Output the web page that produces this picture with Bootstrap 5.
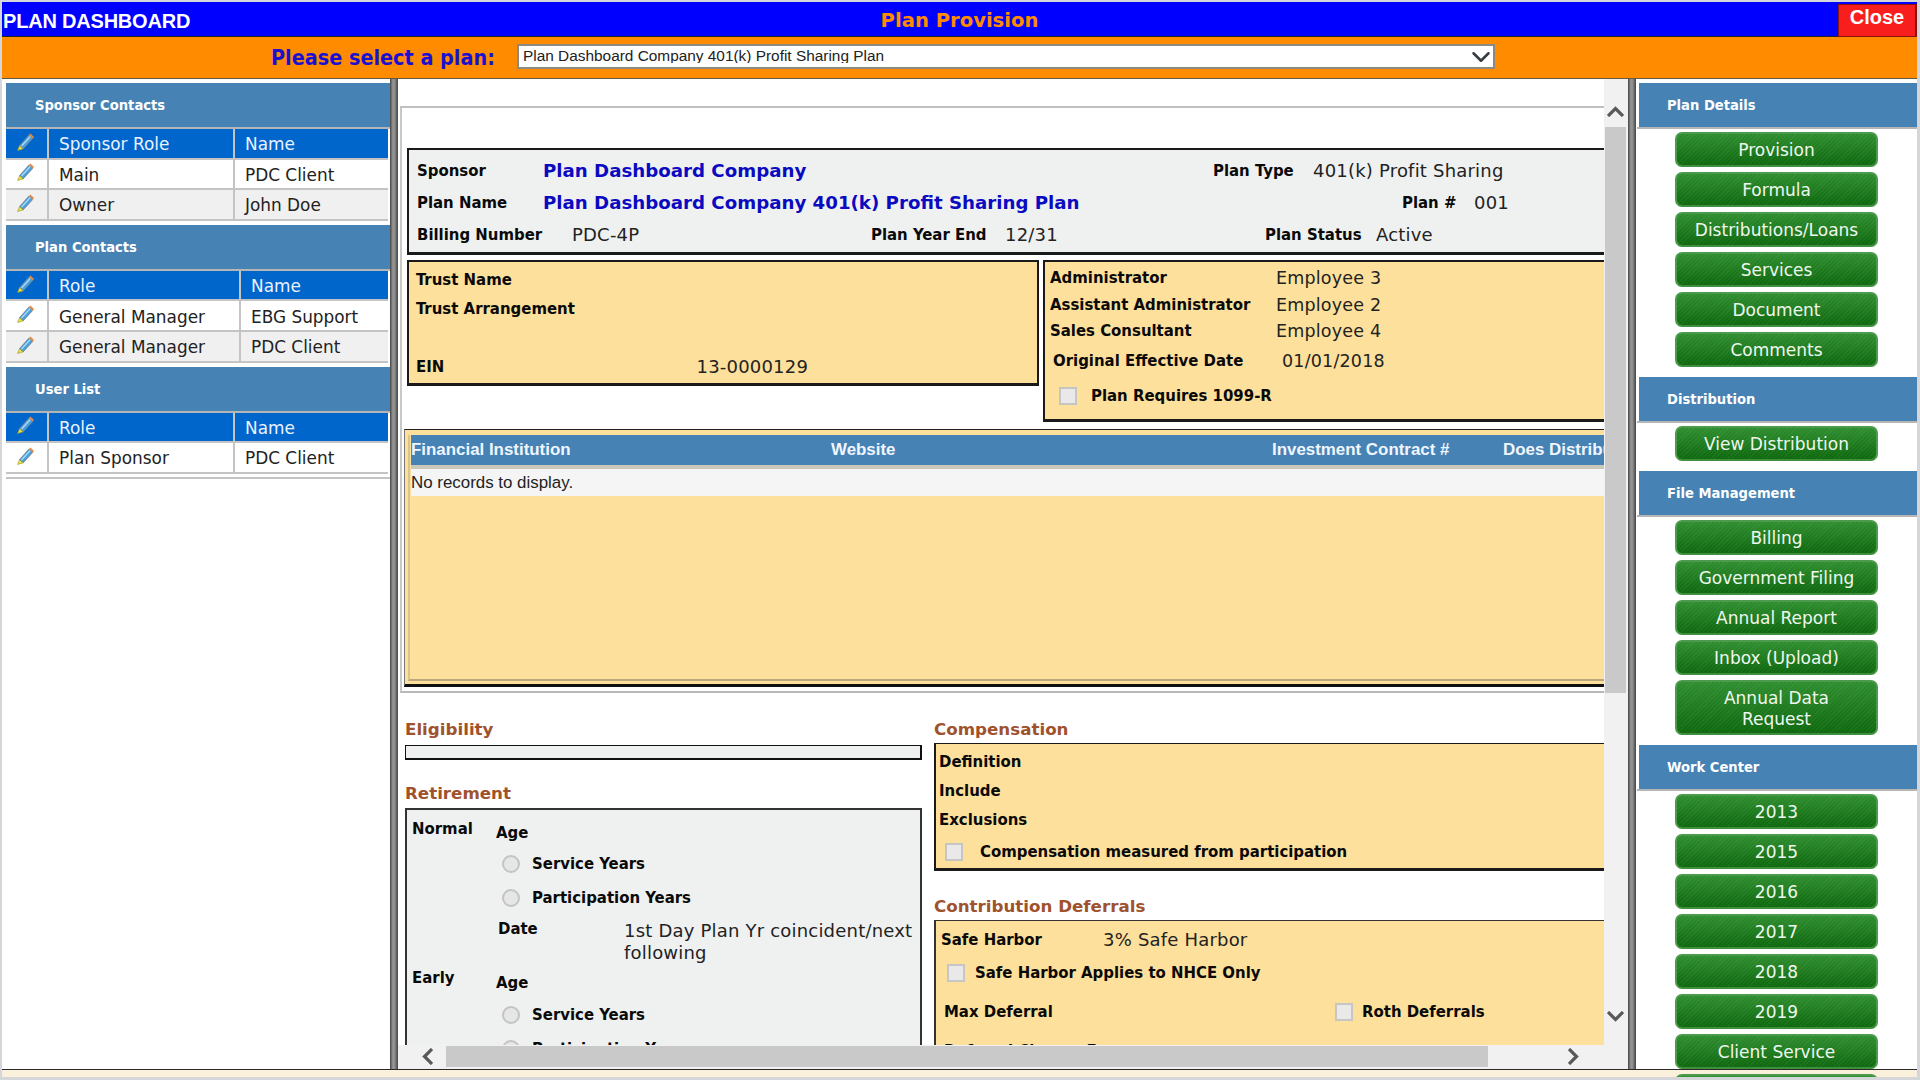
<!DOCTYPE html>
<html lang="en">
<head>
<meta charset="utf-8">
<title>Plan Dashboard</title>
<link href="https://cdn.jsdelivr.net/npm/bootstrap@5.3.0/dist/css/bootstrap.min.css" rel="stylesheet">
<style>
html,body{height:1080px;overflow:hidden}
body{background:#d4d6da;padding:2px 3px 2px 2px;font-family:"DejaVu Sans",Verdana,sans-serif;color:#111;font-size:17.5px}
.appwrap{height:1076px}
.topband{height:35px;background:#0000ff;border-bottom:1px solid #222;display:grid;grid-template-columns:1fr auto 1fr;align-items:center}
.apptitle{font:bold 20px/1 "Liberation Sans",Arial,sans-serif;color:#fff;padding:2px 0 0 1px;letter-spacing:-.2px}
.midtitle{font:bold 19.6px/1 "DejaVu Sans",sans-serif;color:#ff8c00;padding-top:2px}
.closebtn{justify-self:end;width:79px;height:33px;margin-top:2px;background:#f81e1e;border:1px solid #8b1010;border-right-width:2px;color:#fff;font:bold 20px/1 "Liberation Sans",sans-serif;padding:0 0 8px;border-radius:0}
.orangeband{height:42px;background:#ff8c00;border-bottom:1px solid #6b5a3a;padding-left:269px}
.pick-label{font:bold 21.4px/1 "DejaVu Sans Condensed","DejaVu Sans",sans-serif;color:#1a10d0;width:246px;white-space:nowrap}
.plan-select{width:978px;height:25px;border-radius:0;border:2px solid #8a8a80;font:15.4px/1 "Liberation Sans",Arial,sans-serif;color:#222;padding:0 24px 2px 4px;background-position:right 2px center;background-size:20px 20px;margin-top:-2px}
.shellarea{height:998px;background:linear-gradient(#fff 990px,#2a2a2a 990px,#2a2a2a 991px,#fbf0dc 991px)}
.leftcol{width:388px;padding:4px 0 0 4px;height:990px;background:#fff;overflow:hidden}
.splitbar{width:8px;height:990px;background:linear-gradient(90deg,#444,#8a8a8a 30%,#999 50%,#777 70%,#444)}
.sechead{height:44px;background:#4682b4;color:#fff;font:bold 14.6px/44px "DejaVu Sans Condensed","DejaVu Sans",sans-serif;padding-left:29px;border-bottom:0}
.leftcol .sechead{width:384px}
.sechead-line{height:2px;background:#b5b5b5}
.gridtbl{table-layout:fixed;width:382px;margin:0;border-collapse:separate;border-spacing:0;--bs-table-bg:transparent}
.gridtbl td{padding:3px 0 0 10px;height:30.6px;font-size:16.9px;line-height:25px;color:#222;border:0;border-bottom:2px solid #c4c4c4;border-right:2px solid #c4c4c4;vertical-align:middle;background:#fff;box-shadow:none}
.gridtbl td:last-child{border-right:0}
.gridtbl .hdrow td{background:#0066cc;color:#eaf2ff}
.gridtbl .altrow td{background:#f0f0f0}
.col-ico{width:43px}
.col-role-a{width:186px}
.col-role-b{width:192px}
.tblend{margin-bottom:4px}
.tblend2{border-bottom:2px solid #c4c4c4;padding-bottom:3px;width:384px}
.pencil{display:block;width:20px;height:20px;margin-top:-6px}
.midcol{width:1230px;height:990px}
.midview{width:1206px;height:966px;overflow:hidden;background:#fff}
.topstrip{height:29px;border-bottom:2px solid #c0c0c0;margin-left:2px}
.detailframe{height:585px;width:1500px;border-left:2px solid #c8c8c8;margin-left:2px;padding:40px 0 0 5px;border-bottom:2px solid #b8b8b8}
.bx{border:2px solid #1a1a1a;border-bottom-width:3px}
.graybx{background:#eff1f1}
.yelbx{background:#fde09b}
.sponsorbx{width:1500px;height:107px;padding:5px 0 0 8px}
.rw{display:grid;height:32px;align-items:center;white-space:nowrap}
.rw1{grid-template-columns:126px 670px 100px 1fr}
.rw2{grid-template-columns:126px 859px 72px 1fr}
.rw3{grid-template-columns:155px 299px 134px 260px 111px 1fr}
.lb{font:bold 16.6px/1.2 "DejaVu Sans Condensed","DejaVu Sans",sans-serif;color:#0a0a0a}
.vl{font-size:18px;line-height:22px;color:#222;letter-spacing:.2px}
.bl{font:bold 18.2px/1 "DejaVu Sans",sans-serif;color:#0a0ac0}
.pairrow{margin-top:5px;gap:4px}
.trustbx{width:632px;height:126px;padding:3px 0 0 7px;flex:none}
.trustbx .rw{height:29px;grid-template-columns:280.5px 1fr}
.einrow{margin-top:29px}
.adminbx{width:900px;height:162px;padding:3px 0 0 5px;flex:none}
.adminrows .rw{height:26.5px;grid-template-columns:226px 1fr}
.adminrows .vl{font-size:17.5px}
.adminrows .effrow{height:32px;grid-template-columns:229px 1fr;padding-left:3px}
.chkrow{display:flex;align-items:center;height:38px;padding-left:9px}
.fakechk{width:18px;height:18px;background:#e9e9e9;border:2px solid #c6c6c6;flex:none}
.chkrow .fakechk{margin-right:14px}
.finbx{margin-top:7px;margin-left:-3px;width:1500px;height:258px;background:#fde09b;border-top:1px solid #222;border-left:1px solid #777;border-bottom:3px solid #111;padding:5px 0 0 3px}
.fininner{height:246px;border-left:2px solid #d8c48e;border-bottom:2px solid #bba97e;padding-left:1px}
.finhead{height:30px;background:#4682b4;color:#f0f6ff;font:bold 16.9px/30px "Liberation Sans",Arial,sans-serif;display:grid;grid-template-columns:420px 441px 231px 1fr;border-bottom:0;white-space:nowrap}
.finsub{height:4px;background:#c9c8bb}
.finempty{height:27px;background:#f5f5f5;font:16.9px/28px "Liberation Sans",Arial,sans-serif;color:#222}
.twocols{display:grid;grid-template-columns:529px 700px;padding:26px 0 0 7px}
.seclabel{font:bold 16.7px/20px "DejaVu Sans",sans-serif;color:#a0522d;height:20px}
.eligbx{width:517px;height:15px;border:1px solid #111;border-bottom-width:2px;border-right-width:2px;background:#eff1f1;margin:6px 0 23px}
.retbx{width:517px;height:260px;background:#eff1f1;border:2px solid #333;border-bottom:0;margin-top:5px;padding:7px 0 0 5px}
.retgrid{display:grid;grid-template-columns:84px 1fr}
.lbr{height:24px;line-height:24px}
.agecell{margin-top:4px;margin-bottom:2px}
.agecell2{margin-top:5px;margin-bottom:3px}
.radrow{display:flex;align-items:center;height:34px;padding-left:6px}
.fakeradio{width:18px;height:18px;border-radius:50%;background:#e6e6e6;border:2px solid #c4c4c4;margin-right:12px;flex:none}
.daterow{display:grid;grid-template-columns:126px 300px;padding:4px 0 0 2px;height:51px}
.daterow .vl{line-height:22px;padding-top:1px;white-space:normal}
.compbx{width:700px;height:128px;padding:3px 0 0 3px;border-width:1px 0 3px 2px}
.comprow{height:29px;display:flex;align-items:center}
.compbx .chkrow{padding-left:6px;height:36px;margin-top:0}
.compbx .chkrow .fakechk{margin-right:17px}
.contrhead{margin-top:25px}
.contrbx{width:700px;height:150px;padding:4px 0 0 5px;border-width:1px 0 0 2px;border-color:#333;margin-top:4px}
.sfrow{height:30px;display:grid;grid-template-columns:162px 1fr;align-items:center}
.chk2{height:36px;padding-left:6px}
.chk2 .fakechk{margin-right:10px}
.maxrow{display:grid;grid-template-columns:391px 27px 1fr;align-items:center;height:42px;padding-left:3px}
.cliprow{height:30px;padding:8px 0 0 3px}
.vbar{width:24px;height:966px;background:#f1f1f1;padding-right:2px}
.vbtn{height:48px;display:flex;align-items:flex-end;justify-content:center;padding-bottom:10px}
.vthumb{height:566px;background:#c9c9c9;margin-left:1px}
.vdown{margin-top:auto;height:40px;display:flex;justify-content:center;padding-top:6px}
.hbar{height:24px;background:#f1f1f1;display:flex;align-items:center;padding-bottom:2px}
.hleft{width:48px;padding-left:24px;flex:none}
.hthumb{width:1042px;height:21px;background:#c9c9c9;flex:none}
.hright{margin-left:80px}
.rightcol{width:281px;height:998px;overflow:hidden;padding-top:4px;background:linear-gradient(#fff 990px,transparent 990px)}
.rightcol .sechead{margin-left:3px;width:278px;padding-left:28px}
.rightcol .sechead-line{margin-left:1px}
.btnstack{display:flex;flex-direction:column;gap:5px;padding:3px 0 10px 39px}
.greenbtn{width:203px;height:35px;padding:2px 0 0;border-radius:7px;border:2px solid #4c9a4c;border-bottom-color:#3f8f3f;color:#eef7ee;font:17px/1.22 "DejaVu Sans",sans-serif;background:repeating-linear-gradient(135deg,rgba(255,255,255,.05) 0 1px,transparent 1px 3px),linear-gradient(#2f8e2f,#0f690f);--bs-btn-hover-color:#fff}
.tallbtn{height:55px;padding:2px 20px 0}
.chev{display:block;fill:none;stroke:#595959;stroke-width:3.2}
</style>
</head>
<body>
<svg width="0" height="0" class="d-block"><defs>
<g id="pen"><path d="M3.2 12.2 11.6 2.8 15 5.9 6.4 15.2Z" fill="#4a9fdc" stroke="#7a7f88" stroke-width=".7"/><path d="M5 12.6 12.8 4" stroke="#a9dcf5" stroke-width="1.2"/><path d="M11.6 2.8 13 1.4 16.2 4.4 15 5.9Z" fill="#e08b4a"/><path d="M3.2 12.2 1.4 16.6 6.4 15.2Z" fill="#ece23a" stroke="#8e8d2e" stroke-width=".5"/></g>
</defs></svg>
<div class="appwrap d-flex flex-column">
  <header class="topband">
    <div class="apptitle">PLAN DASHBOARD</div>
    <div class="midtitle">Plan Provision</div>
    <button type="button" class="btn closebtn">Close</button>
  </header>
  <div class="orangeband d-flex align-items-center">
    <div class="pick-label">Please select a plan:</div>
    <select class="form-select plan-select"><option>Plan Dashboard Company 401(k) Profit Sharing Plan</option></select>
  </div>
  <main class="shellarea d-flex">
    <aside class="leftcol">
      <div class="sechead">Sponsor Contacts</div><div class="sechead-line"></div>
      <table class="table gridtbl tblend"><colgroup><col class="col-ico"><col class="col-role-a"><col></colgroup>
        <tr class="hdrow"><td><svg class="pencil" viewBox="0 0 18 18"><use href="#pen"/></svg></td><td>Sponsor Role</td><td>Name</td></tr>
        <tr><td><svg class="pencil" viewBox="0 0 18 18"><use href="#pen"/></svg></td><td>Main</td><td>PDC Client</td></tr>
        <tr class="altrow"><td><svg class="pencil" viewBox="0 0 18 18"><use href="#pen"/></svg></td><td>Owner</td><td>John Doe</td></tr>
      </table>
      <div class="sechead">Plan Contacts</div><div class="sechead-line"></div>
      <table class="table gridtbl tblend"><colgroup><col class="col-ico"><col class="col-role-b"><col></colgroup>
        <tr class="hdrow"><td><svg class="pencil" viewBox="0 0 18 18"><use href="#pen"/></svg></td><td>Role</td><td>Name</td></tr>
        <tr><td><svg class="pencil" viewBox="0 0 18 18"><use href="#pen"/></svg></td><td>General Manager</td><td>EBG Support</td></tr>
        <tr class="altrow"><td><svg class="pencil" viewBox="0 0 18 18"><use href="#pen"/></svg></td><td>General Manager</td><td>PDC Client</td></tr>
      </table>
      <div class="sechead">User List</div><div class="sechead-line"></div>
      <div class="tblend2"><table class="table gridtbl"><colgroup><col class="col-ico"><col class="col-role-a"><col></colgroup>
        <tr class="hdrow"><td><svg class="pencil" viewBox="0 0 18 18"><use href="#pen"/></svg></td><td>Role</td><td>Name</td></tr>
        <tr><td><svg class="pencil" viewBox="0 0 18 18"><use href="#pen"/></svg></td><td>Plan Sponsor</td><td>PDC Client</td></tr>
      </table></div>
    </aside>
    <div class="splitbar"></div>
    <section class="midcol d-flex flex-column">
      <div class="d-flex">
        <div class="midview">
          <div class="topstrip"></div>
          <div class="detailframe">
            <div class="bx graybx sponsorbx">
              <div class="rw rw1"><span class="lb">Sponsor</span><span class="bl">Plan Dashboard Company</span><span class="lb">Plan Type</span><span class="vl">401(k) Profit Sharing</span></div>
              <div class="rw rw2"><span class="lb">Plan Name</span><span class="bl">Plan Dashboard Company 401(k) Profit Sharing Plan</span><span class="lb">Plan #</span><span class="vl">001</span></div>
              <div class="rw rw3"><span class="lb">Billing Number</span><span class="vl">PDC-4P</span><span class="lb">Plan Year End</span><span class="vl">12/31</span><span class="lb">Plan Status</span><span class="vl">Active</span></div>
            </div>
            <div class="d-flex pairrow align-items-start">
              <div class="bx yelbx trustbx">
                <div class="rw"><span class="lb">Trust Name</span></div>
                <div class="rw"><span class="lb">Trust Arrangement</span></div>
                <div class="rw einrow"><span class="lb">EIN</span><span class="vl">13-0000129</span></div>
              </div>
              <div class="bx yelbx adminbx">
                <div class="adminrows">
                  <div class="rw"><span class="lb">Administrator</span><span class="vl">Employee 3</span></div>
                  <div class="rw"><span class="lb">Assistant Administrator</span><span class="vl">Employee 2</span></div>
                  <div class="rw"><span class="lb">Sales Consultant</span><span class="vl">Employee 4</span></div>
                  <div class="rw effrow"><span class="lb">Original Effective Date</span><span class="vl">01/01/2018</span></div>
                </div>
                <div class="chkrow"><span class="fakechk"></span><span class="lb">Plan Requires 1099-R</span></div>
              </div>
            </div>
            <div class="finbx">
              <div class="fininner">
                <div class="finhead"><span>Financial Institution</span><span>Website</span><span>Investment Contract #</span><span>Does Distribute</span></div>
                <div class="finsub"></div>
                <div class="finempty">No records to display.</div>
              </div>
            </div>
          </div>
          <div class="twocols">
            <div>
              <div class="seclabel">Eligibility</div>
              <div class="eligbx"></div>
              <div class="seclabel">Retirement</div>
              <div class="retbx">
                <div class="retgrid">
                  <div class="lb lbr">Normal</div>
                  <div>
                    <div class="lb lbr agecell">Age</div>
                    <div class="radrow"><span class="fakeradio"></span><span class="lb">Service Years</span></div>
                    <div class="radrow"><span class="fakeradio"></span><span class="lb">Participation Years</span></div>
                    <div class="daterow"><span class="lb">Date</span><span class="vl">1st Day Plan Yr coincident/next following</span></div>
                  </div>
                  <div class="lb lbr">Early</div>
                  <div>
                    <div class="lb lbr agecell2">Age</div>
                    <div class="radrow"><span class="fakeradio"></span><span class="lb">Service Years</span></div>
                    <div class="radrow"><span class="fakeradio"></span><span class="lb">Participation Years</span></div>
                  </div>
                </div>
              </div>
            </div>
            <div>
              <div class="seclabel">Compensation</div>
              <div class="bx yelbx compbx mt-1">
                <div class="comprow"><span class="lb">Definition</span></div>
                <div class="comprow"><span class="lb">Include</span></div>
                <div class="comprow"><span class="lb">Exclusions</span></div>
                <div class="chkrow"><span class="fakechk"></span><span class="lb">Compensation measured from participation</span></div>
              </div>
              <div class="seclabel contrhead">Contribution Deferrals</div>
              <div class="bx yelbx contrbx">
                <div class="sfrow"><span class="lb">Safe Harbor</span><span class="vl">3% Safe Harbor</span></div>
                <div class="chkrow chk2"><span class="fakechk"></span><span class="lb">Safe Harbor Applies to NHCE Only</span></div>
                <div class="maxrow"><span class="lb">Max Deferral</span><span class="fakechk"></span><span class="lb">Roth Deferrals</span></div>
                <div class="cliprow lb">Deferral Change Frequency</div>
              </div>
            </div>
          </div>
        </div>
        <div class="vbar d-flex flex-column">
          <div class="vbtn"><svg class="chev" width="17" height="11" viewBox="0 0 17 11"><path d="M1 10 8.5 2.5 16 10"/></svg></div>
          <div class="vthumb"></div>
          <div class="vdown"><svg class="chev" width="17" height="11" viewBox="0 0 17 11"><path d="M1 1 8.5 8.5 16 1"/></svg></div>
        </div>
      </div>
      <div class="hbar">
        <div class="hleft"><svg class="chev" width="11" height="17" viewBox="0 0 11 17"><path d="M10 1 2.5 8.5 10 16"/></svg></div>
        <div class="hthumb"></div>
        <div class="hright"><svg class="chev" width="11" height="17" viewBox="0 0 11 17"><path d="M1 1 8.5 8.5 1 16"/></svg></div>
      </div>
    </section>
    <div class="splitbar"></div>
    <aside class="rightcol">
      <div class="sechead">Plan Details</div><div class="sechead-line"></div>
      <div class="btnstack">
        <button type="button" class="btn greenbtn">Provision</button>
        <button type="button" class="btn greenbtn">Formula</button>
        <button type="button" class="btn greenbtn">Distributions/Loans</button>
        <button type="button" class="btn greenbtn">Services</button>
        <button type="button" class="btn greenbtn">Document</button>
        <button type="button" class="btn greenbtn">Comments</button>
      </div>
      <div class="sechead">Distribution</div><div class="sechead-line"></div>
      <div class="btnstack">
        <button type="button" class="btn greenbtn">View Distribution</button>
      </div>
      <div class="sechead">File Management</div><div class="sechead-line"></div>
      <div class="btnstack">
        <button type="button" class="btn greenbtn">Billing</button>
        <button type="button" class="btn greenbtn">Government Filing</button>
        <button type="button" class="btn greenbtn">Annual Report</button>
        <button type="button" class="btn greenbtn">Inbox (Upload)</button>
        <button type="button" class="btn greenbtn tallbtn">Annual Data Request</button>
      </div>
      <div class="sechead">Work Center</div><div class="sechead-line"></div>
      <div class="btnstack">
        <button type="button" class="btn greenbtn">2013</button>
        <button type="button" class="btn greenbtn">2015</button>
        <button type="button" class="btn greenbtn">2016</button>
        <button type="button" class="btn greenbtn">2017</button>
        <button type="button" class="btn greenbtn">2018</button>
        <button type="button" class="btn greenbtn">2019</button>
        <button type="button" class="btn greenbtn">Client Service</button>
        <button type="button" class="btn greenbtn">Reports</button>
      </div>
    </aside>
  </main>
</div>
<script src="https://cdn.jsdelivr.net/npm/bootstrap@5.3.0/dist/js/bootstrap.bundle.min.js"></script>
</body>
</html>
